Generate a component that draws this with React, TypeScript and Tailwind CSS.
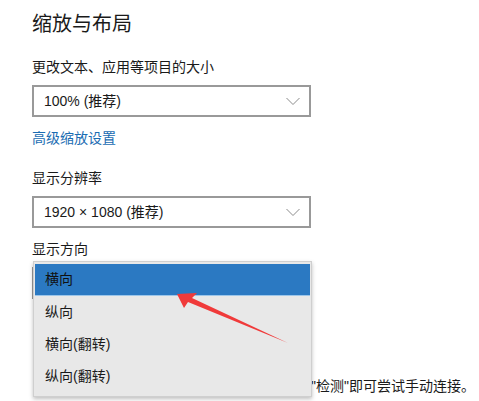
import React from "react";

const font = { fontFamily: '"Liberation Sans", "Noto Sans CJK SC", sans-serif' };

const Chevron: React.FC = () => (
  <svg width="16" height="9" viewBox="0 0 16 9" fill="none">
    <path d="M1.5 1l6.5 6.5 6.5-6.5" stroke="#8c8c8c" strokeWidth="1" />
  </svg>
);

const Select: React.FC<{ value: string }> = ({ value }) => (
  <div className="w-[279px] h-[32px] border-2 border-[#999] flex items-center justify-between pl-[10px] pr-[8px] text-[14px] text-[#1a1a1a]">
    <span>{value}</span>
    <Chevron />
  </div>
);

const App: React.FC = () => {
  const items = ["横向", "纵向", "横向(翻转)", "纵向(翻转)"];
  return (
    <div className="relative w-[479px] h-[401px] overflow-hidden bg-white text-[#1a1a1a]" style={font}>
      <div className="flex flex-col pl-[32px]">
        <div className="mt-[10px] text-[20px] leading-[28px]">缩放与布局</div>
        <div className="mt-[19px] text-[14px] leading-[20px]">更改文本、应用等项目的大小</div>
        <div className="mt-[8px]">
          <Select value="100% (推荐)" />
        </div>
        <div className="mt-[11px] text-[14px] leading-[20px] text-[#1a6cb2]">高级缩放设置</div>
        <div className="mt-[20px] text-[14px] leading-[20px]">显示分辨率</div>
        <div className="mt-[8px]">
          <Select value="1920 × 1080 (推荐)" />
        </div>
        <div className="mt-[11px] text-[14px] leading-[20px]">显示方向</div>
        <div className="mt-[8px]">
          <Select value="" />
        </div>
        <div className="mt-[77px] pl-[279px] text-[14px] leading-[20px] whitespace-nowrap">"检测"即可尝试手动连接。</div>
      </div>

      {/* open dropdown */}
      <div className="absolute left-[33px] top-[261px] w-[279px] h-[136px] bg-[#e8e8e8] border border-[#cfcfcf] shadow-[0_2px_4px_rgba(0,0,0,0.25)] pt-[2px] pl-[1px] pr-[1px] flex flex-col text-[14px]">
        {items.map((t, i) => (
          <div
            key={t}
            className={
              i === 0
                ? "h-[32px] flex items-center pl-[10px] bg-[#2b79c2] border-b border-[#9cc6ea] text-[#111]"
                : "h-[32px] flex items-center pl-[10px]"
            }
          >
            {t}
          </div>
        ))}
      </div>

      {/* red arrow */}
      <svg className="absolute left-0 top-0" width="479" height="401" viewBox="0 0 479 401">
        <path
          d="M177 294 L197 293 L192 298 L288 343 L188 302 L184 308 Z"
          fill="#f03a3a"
        />
      </svg>
    </div>
  );
};

export default App;
